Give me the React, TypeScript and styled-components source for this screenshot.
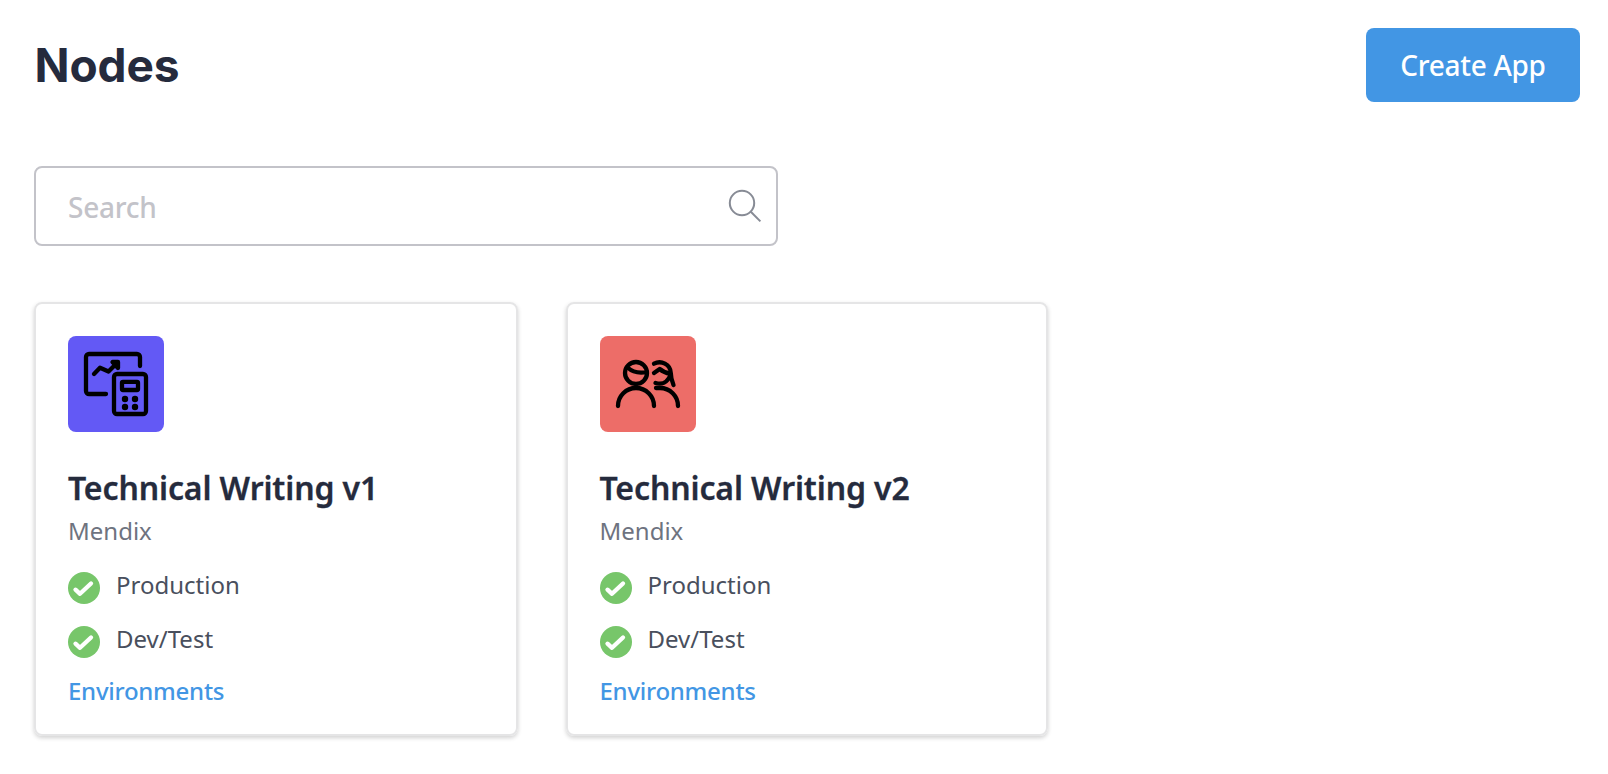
import React from "react";
import styled, { createGlobalStyle } from "styled-components";

const GlobalStyle = createGlobalStyle`
  *, *::before, *::after { box-sizing: border-box; }
  body {
    margin: 0;
    background: #fff;
    color: #252b3d;
    font-family: "Noto Sans", "Open Sans", sans-serif;
  }
`;

const Page = styled.main`
  height: 774px;
  padding: 28px 28px 0 34px;
  overflow: hidden;
`;

const Header = styled.header`
  display: flex;
  justify-content: space-between;
  height: 74px;
`;

const PageTitle = styled.h1`
  margin: 0 0 0 0.5px;
  font-family: Inter, sans-serif;
  font-size: 46px;
  font-weight: 660;
  line-height: 75px;
  letter-spacing: -0.1px;
`;

const CreateButton = styled.button`
  width: 214px;
  height: 74px;
  padding: 0 0 1px;
  border: 0;
  border-radius: 8px;
  background: #4296e4;
  color: #fff;
  font: 500 28px/38px "Noto Sans", sans-serif;
  letter-spacing: -0.3px;
`;

const SearchBox = styled.label`
  display: flex;
  align-items: center;
  width: 744px;
  height: 80px;
  margin-top: 64px;
  padding: 0 14px 0 32px;
  border: 2px solid #c3c3c9;
  border-radius: 8px;
`;

const SearchInput = styled.input`
  flex: 1;
  min-width: 0;
  height: 40px;
  padding: 2px 0 0;
  border: 0;
  outline: 0;
  background: transparent;
  font: 500 28px/38px "Noto Sans", sans-serif;
  letter-spacing: -0.25px;
  &::placeholder { color: #c3c3c9; opacity: 1; }
`;

const Cards = styled.section`
  display: flex;
  gap: 48px;
  margin-top: 56px;
`;

const Card = styled.article`
  width: 483.5px;
  height: 434px;
  padding: 32px;
  border: 2px solid #e5e5e6;
  border-radius: 8px;
  box-shadow: 0 2px 4px rgba(0, 0, 0, 0.18);

  & + & { width: 482.5px; }
`;

const AppIcon = styled.div<{ $color: string }>`
  width: 96px;
  height: 96px;
  border-radius: 8px;
  background: ${(p) => p.$color};
  svg { display: block; }
`;

const CardTitle = styled.h2`
  margin: 34px 0 0;
  font-size: 32px;
  font-weight: 600;
  line-height: 44px;
  letter-spacing: -0.12px;
  -webkit-text-stroke: 0.3px currentColor;
`;

const Platform = styled.p`
  margin: 5px 0 21px;
  color: #6e737f;
  font-size: 24px;
  line-height: 32px;
`;

const Environment = styled.div`
  display: flex;
  gap: 16px;
  height: 54px;
  color: #494f5d;
  font-size: 24px;
  line-height: 34px;
  svg { margin-top: 4px; }
`;

const EnvironmentsLink = styled.a`
  display: block;
  margin-top: -2px;
  color: #4296e4;
  font-size: 24px;
  font-weight: 500;
  line-height: 34px;
  letter-spacing: -0.26px;
`;

const SearchIcon = () => (
  <svg width="34" height="34" viewBox="0 0 34 34" fill="none" stroke="#878b95" strokeWidth="2">
    <circle cx="14" cy="14" r="12.2" />
    <path d="m22.8 22.8 9.6 9.6" />
  </svg>
);

const FinanceIcon = () => (
  <svg width="96" height="96" viewBox="0 0 96 96" fill="none" stroke="#000" strokeWidth="4.3" strokeLinecap="round" strokeLinejoin="round">
    <path d="M38 58H21a3 3 0 0 1-3-3V21a3 3 0 0 1 3-3h48a3 3 0 0 1 3 3v9" />
    <path d="m26 38 6-6.2 8.5 3.7L49 27" />
    <path d="M44.5 26H50v6Z" fill="#000" />
    <rect x="46" y="38" width="32" height="40" rx="3" />
    <rect x="54" y="45.8" width="16" height="8.2" rx="1" />
    <g fill="#000" stroke="none">
      <circle cx="57" cy="63" r="3.2" />
      <circle cx="67" cy="63" r="3.2" />
      <circle cx="57" cy="71" r="3.2" />
      <circle cx="67" cy="71" r="3.2" />
    </g>
  </svg>
);

const PeopleIcon = () => (
  <svg width="96" height="96" viewBox="0 0 96 96" fill="none" stroke="#000" strokeWidth="4.3" strokeLinecap="round" strokeLinejoin="round">
    <circle cx="36" cy="37" r="11" />
    <path d="M27.5 31.5c5 4.5 12.5 6 19.5 4.5" />
    <path d="M18 70a18 18 0 0 1 36 0" />
    <path d="M54 27.7C61 24 70.5 28 70.8 37c0 4.5 1 8 2.7 12" />
    <path d="m54 37 5.7-4c3 2.500 6 4 10 4.500" />
    <path d="M55.5 47c6 2 12-.5 15-8" />
    <path d="M56 52h4a18 18 0 0 1 18 18" />
  </svg>
);

const CheckIcon = () => (
  <svg width="32" height="32" viewBox="0 0 32 32" fill="none">
    <circle cx="16" cy="16" r="16" fill="#77c66a" />
    <path d="m7.5 17.7 4.5 4.1L23 11.5" stroke="#fff" strokeWidth="4.3" strokeLinecap="round" strokeLinejoin="round" />
  </svg>
);

const apps = [
  { name: "Technical Writing v1", color: "#6359f5", Icon: FinanceIcon },
  { name: "Technical Writing v2", color: "#ed6d68", Icon: PeopleIcon },
];

export default function App() {
  return (
    <>
      <GlobalStyle />
      <Page>
        <Header>
          <PageTitle>Nodes</PageTitle>
          <CreateButton>Create App</CreateButton>
        </Header>
        <SearchBox>
          <SearchInput placeholder="Search" />
          <SearchIcon />
        </SearchBox>
        <Cards>
          {apps.map(({ name, color, Icon }) => (
            <Card key={name}>
              <AppIcon $color={color}><Icon /></AppIcon>
              <CardTitle>{name}</CardTitle>
              <Platform>Mendix</Platform>
              {["Production", "Dev/Test"].map((environment) => (
                <Environment key={environment}>
                  <CheckIcon />
                  <span>{environment}</span>
                </Environment>
              ))}
              <EnvironmentsLink>Environments</EnvironmentsLink>
            </Card>
          ))}
        </Cards>
      </Page>
    </>
  );
}
